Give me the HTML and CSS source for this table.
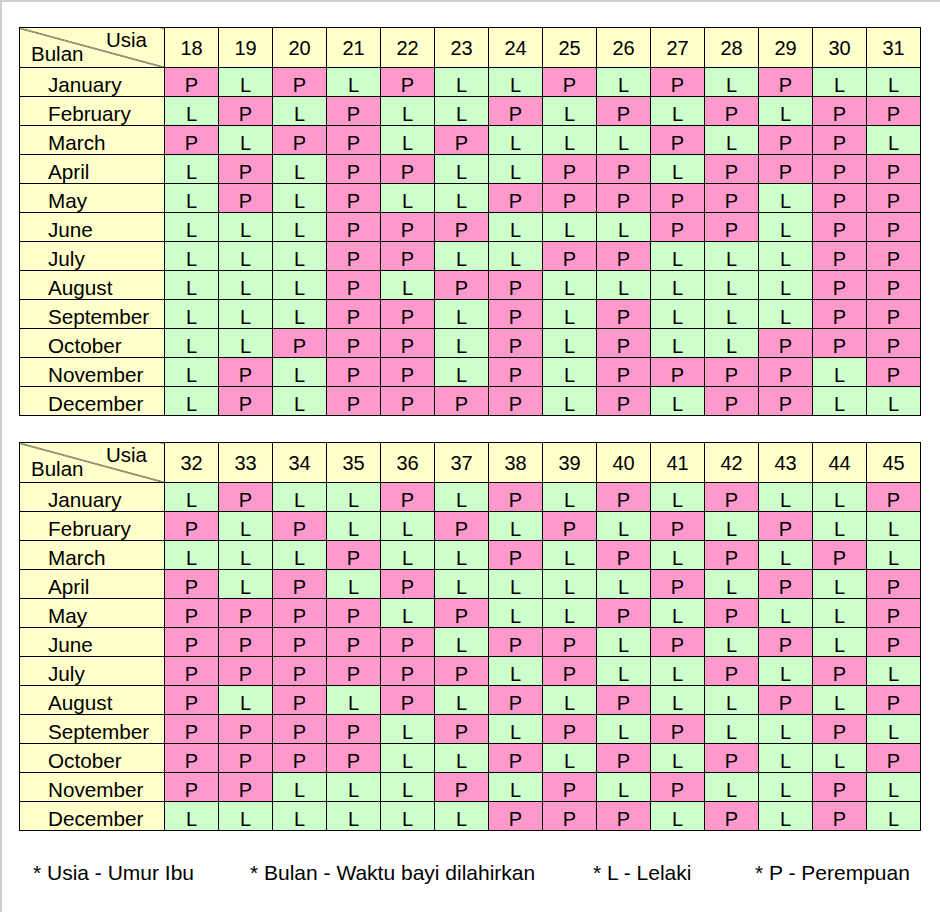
FILE: index.html
```html
<!DOCTYPE html>
<html>
<head>
<meta charset="utf-8">
<link rel="stylesheet" href="styles.css">
</head>
<body>
<div class="page">
<table class="chart">
<colgroup><col class="c-month"><col class="c-age"><col class="c-age"><col class="c-age"><col class="c-age"><col class="c-age"><col class="c-age"><col class="c-age"><col class="c-age"><col class="c-age"><col class="c-age"><col class="c-age"><col class="c-age"><col class="c-age"><col class="c-age"></colgroup>
<tr class="head"><th class="corner"><div class="corner-in"><span class="usia">Usia</span><span class="bulan">Bulan</span></div></th><th>18</th><th>19</th><th>20</th><th>21</th><th>22</th><th>23</th><th>24</th><th>25</th><th>26</th><th>27</th><th>28</th><th>29</th><th>30</th><th>31</th></tr>
<tr><th class="month">January</th><td class="p">P</td><td class="l">L</td><td class="p">P</td><td class="l">L</td><td class="p">P</td><td class="l">L</td><td class="l">L</td><td class="p">P</td><td class="l">L</td><td class="p">P</td><td class="l">L</td><td class="p">P</td><td class="l">L</td><td class="l">L</td></tr>
<tr><th class="month">February</th><td class="l">L</td><td class="p">P</td><td class="l">L</td><td class="p">P</td><td class="l">L</td><td class="l">L</td><td class="p">P</td><td class="l">L</td><td class="p">P</td><td class="l">L</td><td class="p">P</td><td class="l">L</td><td class="p">P</td><td class="p">P</td></tr>
<tr><th class="month">March</th><td class="p">P</td><td class="l">L</td><td class="p">P</td><td class="p">P</td><td class="l">L</td><td class="p">P</td><td class="l">L</td><td class="l">L</td><td class="l">L</td><td class="p">P</td><td class="l">L</td><td class="p">P</td><td class="p">P</td><td class="l">L</td></tr>
<tr><th class="month">April</th><td class="l">L</td><td class="p">P</td><td class="l">L</td><td class="p">P</td><td class="p">P</td><td class="l">L</td><td class="l">L</td><td class="p">P</td><td class="p">P</td><td class="l">L</td><td class="p">P</td><td class="p">P</td><td class="p">P</td><td class="p">P</td></tr>
<tr><th class="month">May</th><td class="l">L</td><td class="p">P</td><td class="l">L</td><td class="p">P</td><td class="l">L</td><td class="l">L</td><td class="p">P</td><td class="p">P</td><td class="p">P</td><td class="p">P</td><td class="p">P</td><td class="l">L</td><td class="p">P</td><td class="p">P</td></tr>
<tr><th class="month">June</th><td class="l">L</td><td class="l">L</td><td class="l">L</td><td class="p">P</td><td class="p">P</td><td class="p">P</td><td class="l">L</td><td class="l">L</td><td class="l">L</td><td class="p">P</td><td class="p">P</td><td class="l">L</td><td class="p">P</td><td class="p">P</td></tr>
<tr><th class="month">July</th><td class="l">L</td><td class="l">L</td><td class="l">L</td><td class="p">P</td><td class="p">P</td><td class="l">L</td><td class="l">L</td><td class="p">P</td><td class="p">P</td><td class="l">L</td><td class="l">L</td><td class="l">L</td><td class="p">P</td><td class="p">P</td></tr>
<tr><th class="month">August</th><td class="l">L</td><td class="l">L</td><td class="l">L</td><td class="p">P</td><td class="l">L</td><td class="p">P</td><td class="p">P</td><td class="l">L</td><td class="l">L</td><td class="l">L</td><td class="l">L</td><td class="l">L</td><td class="p">P</td><td class="p">P</td></tr>
<tr><th class="month">September</th><td class="l">L</td><td class="l">L</td><td class="l">L</td><td class="p">P</td><td class="p">P</td><td class="l">L</td><td class="p">P</td><td class="l">L</td><td class="p">P</td><td class="l">L</td><td class="l">L</td><td class="l">L</td><td class="p">P</td><td class="p">P</td></tr>
<tr><th class="month">October</th><td class="l">L</td><td class="l">L</td><td class="p">P</td><td class="p">P</td><td class="p">P</td><td class="l">L</td><td class="p">P</td><td class="l">L</td><td class="p">P</td><td class="l">L</td><td class="l">L</td><td class="p">P</td><td class="p">P</td><td class="p">P</td></tr>
<tr><th class="month">November</th><td class="l">L</td><td class="p">P</td><td class="l">L</td><td class="p">P</td><td class="p">P</td><td class="l">L</td><td class="p">P</td><td class="l">L</td><td class="p">P</td><td class="p">P</td><td class="p">P</td><td class="p">P</td><td class="l">L</td><td class="p">P</td></tr>
<tr><th class="month">December</th><td class="l">L</td><td class="p">P</td><td class="l">L</td><td class="p">P</td><td class="p">P</td><td class="p">P</td><td class="p">P</td><td class="l">L</td><td class="p">P</td><td class="l">L</td><td class="p">P</td><td class="p">P</td><td class="l">L</td><td class="l">L</td></tr>
</table>

<table class="chart">
<colgroup><col class="c-month"><col class="c-age"><col class="c-age"><col class="c-age"><col class="c-age"><col class="c-age"><col class="c-age"><col class="c-age"><col class="c-age"><col class="c-age"><col class="c-age"><col class="c-age"><col class="c-age"><col class="c-age"><col class="c-age"></colgroup>
<tr class="head"><th class="corner"><div class="corner-in"><span class="usia">Usia</span><span class="bulan">Bulan</span></div></th><th>32</th><th>33</th><th>34</th><th>35</th><th>36</th><th>37</th><th>38</th><th>39</th><th>40</th><th>41</th><th>42</th><th>43</th><th>44</th><th>45</th></tr>
<tr><th class="month">January</th><td class="l">L</td><td class="p">P</td><td class="l">L</td><td class="l">L</td><td class="p">P</td><td class="l">L</td><td class="p">P</td><td class="l">L</td><td class="p">P</td><td class="l">L</td><td class="p">P</td><td class="l">L</td><td class="l">L</td><td class="p">P</td></tr>
<tr><th class="month">February</th><td class="p">P</td><td class="l">L</td><td class="p">P</td><td class="l">L</td><td class="l">L</td><td class="p">P</td><td class="l">L</td><td class="p">P</td><td class="l">L</td><td class="p">P</td><td class="l">L</td><td class="p">P</td><td class="l">L</td><td class="l">L</td></tr>
<tr><th class="month">March</th><td class="l">L</td><td class="l">L</td><td class="l">L</td><td class="p">P</td><td class="l">L</td><td class="l">L</td><td class="p">P</td><td class="l">L</td><td class="p">P</td><td class="l">L</td><td class="p">P</td><td class="l">L</td><td class="p">P</td><td class="l">L</td></tr>
<tr><th class="month">April</th><td class="p">P</td><td class="l">L</td><td class="p">P</td><td class="l">L</td><td class="p">P</td><td class="l">L</td><td class="l">L</td><td class="l">L</td><td class="l">L</td><td class="p">P</td><td class="l">L</td><td class="p">P</td><td class="l">L</td><td class="p">P</td></tr>
<tr><th class="month">May</th><td class="p">P</td><td class="p">P</td><td class="p">P</td><td class="p">P</td><td class="l">L</td><td class="p">P</td><td class="l">L</td><td class="l">L</td><td class="p">P</td><td class="l">L</td><td class="p">P</td><td class="l">L</td><td class="l">L</td><td class="p">P</td></tr>
<tr><th class="month">June</th><td class="p">P</td><td class="p">P</td><td class="p">P</td><td class="p">P</td><td class="p">P</td><td class="l">L</td><td class="p">P</td><td class="p">P</td><td class="l">L</td><td class="p">P</td><td class="l">L</td><td class="p">P</td><td class="l">L</td><td class="p">P</td></tr>
<tr><th class="month">July</th><td class="p">P</td><td class="p">P</td><td class="p">P</td><td class="p">P</td><td class="p">P</td><td class="p">P</td><td class="l">L</td><td class="p">P</td><td class="l">L</td><td class="l">L</td><td class="p">P</td><td class="l">L</td><td class="p">P</td><td class="l">L</td></tr>
<tr><th class="month">August</th><td class="p">P</td><td class="l">L</td><td class="p">P</td><td class="l">L</td><td class="p">P</td><td class="l">L</td><td class="p">P</td><td class="l">L</td><td class="p">P</td><td class="l">L</td><td class="l">L</td><td class="p">P</td><td class="l">L</td><td class="p">P</td></tr>
<tr><th class="month">September</th><td class="p">P</td><td class="p">P</td><td class="p">P</td><td class="p">P</td><td class="l">L</td><td class="p">P</td><td class="l">L</td><td class="p">P</td><td class="l">L</td><td class="p">P</td><td class="l">L</td><td class="l">L</td><td class="p">P</td><td class="l">L</td></tr>
<tr><th class="month">October</th><td class="p">P</td><td class="p">P</td><td class="p">P</td><td class="p">P</td><td class="l">L</td><td class="l">L</td><td class="p">P</td><td class="l">L</td><td class="p">P</td><td class="l">L</td><td class="p">P</td><td class="l">L</td><td class="l">L</td><td class="p">P</td></tr>
<tr><th class="month">November</th><td class="p">P</td><td class="p">P</td><td class="l">L</td><td class="l">L</td><td class="l">L</td><td class="p">P</td><td class="l">L</td><td class="p">P</td><td class="l">L</td><td class="p">P</td><td class="l">L</td><td class="l">L</td><td class="p">P</td><td class="l">L</td></tr>
<tr><th class="month">December</th><td class="l">L</td><td class="l">L</td><td class="l">L</td><td class="l">L</td><td class="l">L</td><td class="l">L</td><td class="p">P</td><td class="p">P</td><td class="p">P</td><td class="l">L</td><td class="p">P</td><td class="l">L</td><td class="p">P</td><td class="l">L</td></tr>
</table>

<div class="legend">
<span>* Usia - Umur Ibu</span>
<span>* Bulan - Waktu bayi dilahirkan</span>
<span>* L - Lelaki</span>
<span>* P - Perempuan</span>
</div>
</div>
</body>
</html>
```

FILE: styles.css
```css
html, body {
  margin: 0;
  padding: 0;
  background: #ffffff;
}

body {
  font-family: "Liberation Sans", Arial, sans-serif;
  color: #000;
}

.page {
  width: 940px;
  height: 912px;
  border-top: 2px solid #cfcfcf;
  border-left: 2px solid #cfcfcf;
  padding: 25px 0 0 17px;
  box-sizing: border-box;
}

.chart {
  border-collapse: collapse;
  table-layout: fixed;
  width: 902px;
  font-size: 20px;
  margin-bottom: 26px;
}

.c-month { width: 145px; }
.c-age { width: 54px; }

.chart th,
.chart td {
  border: 1px solid #000;
  padding: 0;
  font-weight: normal;
  text-align: center;
  line-height: 22px;
}

.chart td {
  padding-top: 5px;
}

.chart tr { height: 29px; }
.chart tr.head { height: 40px; }

.chart .head th {
  background: #ffffcc;
}

.chart th.month {
  background: #ffffcc;
  text-align: left;
  padding-left: 28px;
  padding-top: 5px;
  font-size: 20.7px;
}

.chart td.p { background: #ff99cc; }
.chart td.l { background: #ccffcc; }

.chart th.corner {
  background: linear-gradient(to top right, #ffffcc calc(50% - 0.8px), #000 50%, #ffffcc calc(50% + 0.8px));
}

.corner-in {
  height: 39px;
  display: flex;
  flex-direction: column;
  justify-content: space-between;
  line-height: 13px;
  box-sizing: border-box;
  padding: 5px 17px 7px 11px;
  font-size: 20.5px;
}

.usia { align-self: flex-end; }
.bulan { align-self: flex-start; }

.legend {
  display: grid;
  grid-template-columns: 217px 343px 162px auto;
  font-size: 21px;
  padding: 4px 0 0 14px;
}
```
